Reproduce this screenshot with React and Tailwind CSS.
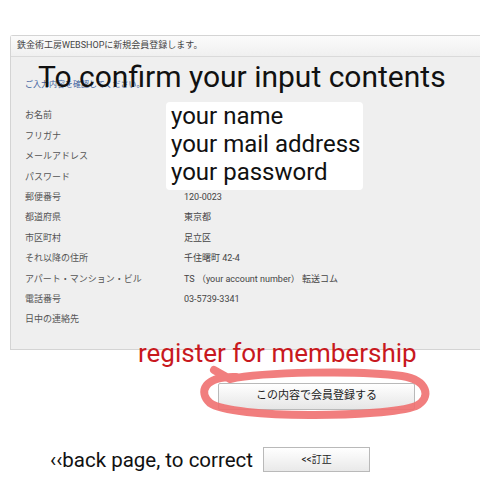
import React from 'react';

const rows = [
  { label: 'お名前', value: '' },
  { label: 'フリガナ', value: '' },
  { label: 'メールアドレス', value: '' },
  { label: 'パスワード', value: '' },
  { label: '郵便番号', value: '120-0023' },
  { label: '都道府県', value: '東京都' },
  { label: '市区町村', value: '足立区' },
  { label: 'それ以降の住所', value: '千住曙町 42-4' },
  { label: 'アパート・マンション・ビル', value: 'TS （your account number） 転送コム' },
  { label: '電話番号', value: '03-5739-3341' },
  { label: '日中の連絡先', value: '' },
];

const App = () => {
  return (
    <div className="relative w-[480px] h-[480px] overflow-hidden bg-white font-['Roboto','Noto_Sans_CJK_JP',sans-serif]">
      <div className="pt-[35px] pl-[10px]">
        <div className="h-[315px] bg-[#efefef] border border-r-0 border-[#d4d4d4] rounded-tl-[3px]">
          <div className="h-[21px] flex items-center pl-[6px] bg-gradient-to-b from-[#fbfbfb] to-[#f0f0f0] border-b border-[#dadada] text-[9px] text-[#444]">
            鉄金術工房WEBSHOPに新規会員登録します。
          </div>
          <div className="pl-[14px] pt-[22px]">
            <p className="text-[8px] leading-[12px] text-[#3d5f9e]">ご入力内容を確認してください。</p>
            <div className="mt-[15px]">
              {rows.map((row) => (
                <div key={row.label} className="grid grid-cols-[159px_1fr] h-[20.4px] items-center text-[9px] text-[#555]">
                  <span>{row.label}</span>
                  <span className="text-[#444]">{row.value}</span>
                </div>
              ))}
            </div>
          </div>
        </div>
      </div>

      <div className="flex pl-[218px] pt-[33px]">
        <button className="w-[197px] h-[27px] border border-[#b9b9b9] bg-gradient-to-b from-white to-[#e6e6e6] text-[11px] text-[#222] rounded-[2px]">
          この内容で会員登録する
        </button>
      </div>

      <div className="flex items-center pl-[50px] pt-[37px] gap-[10px]">
        <span className="text-[20.5px] leading-[24px] text-[#111]">‹‹back page, to correct</span>
        <button className="w-[107px] h-[25px] border border-[#b9b9b9] bg-gradient-to-b from-white to-[#e9e9e9] text-[10px] text-[#222]">
          &lt;&lt;訂正
        </button>
      </div>

      {/* annotations drawn over the screenshot */}
      <div className="absolute left-[38px] top-[58px] text-[30px] leading-[38px] text-[#111] whitespace-nowrap">
        To confirm your input contents
      </div>
      <div className="absolute left-[166px] top-[102px] w-[197px] h-[88px] bg-white rounded-[4px] pl-[5px]">
        <p className="text-[24px] leading-[28px] text-[#111]">your name</p>
        <p className="text-[24px] leading-[28px] text-[#111]">your mail address</p>
        <p className="text-[24px] leading-[28px] text-[#111]">your password</p>
      </div>
      <div className="absolute left-[138px] top-[338px] text-[26px] leading-[30px] text-[#c8191e] whitespace-nowrap">
        register for membership
      </div>
      <svg className="absolute left-0 top-0 pointer-events-none" width="480" height="480">
        <path
          d="M236 377 C 204 376, 198 392, 210 403 C 232 419, 384 418, 416 406 C 432 398, 428 380, 402 376 C 360 370, 262 372, 230 379 L 214 370"
          fill="none"
          stroke="#f07070"
          strokeWidth="8"
          strokeLinecap="round"
          strokeLinejoin="round"
          opacity="0.9"
        />
      </svg>
    </div>
  );
};

export default App;
